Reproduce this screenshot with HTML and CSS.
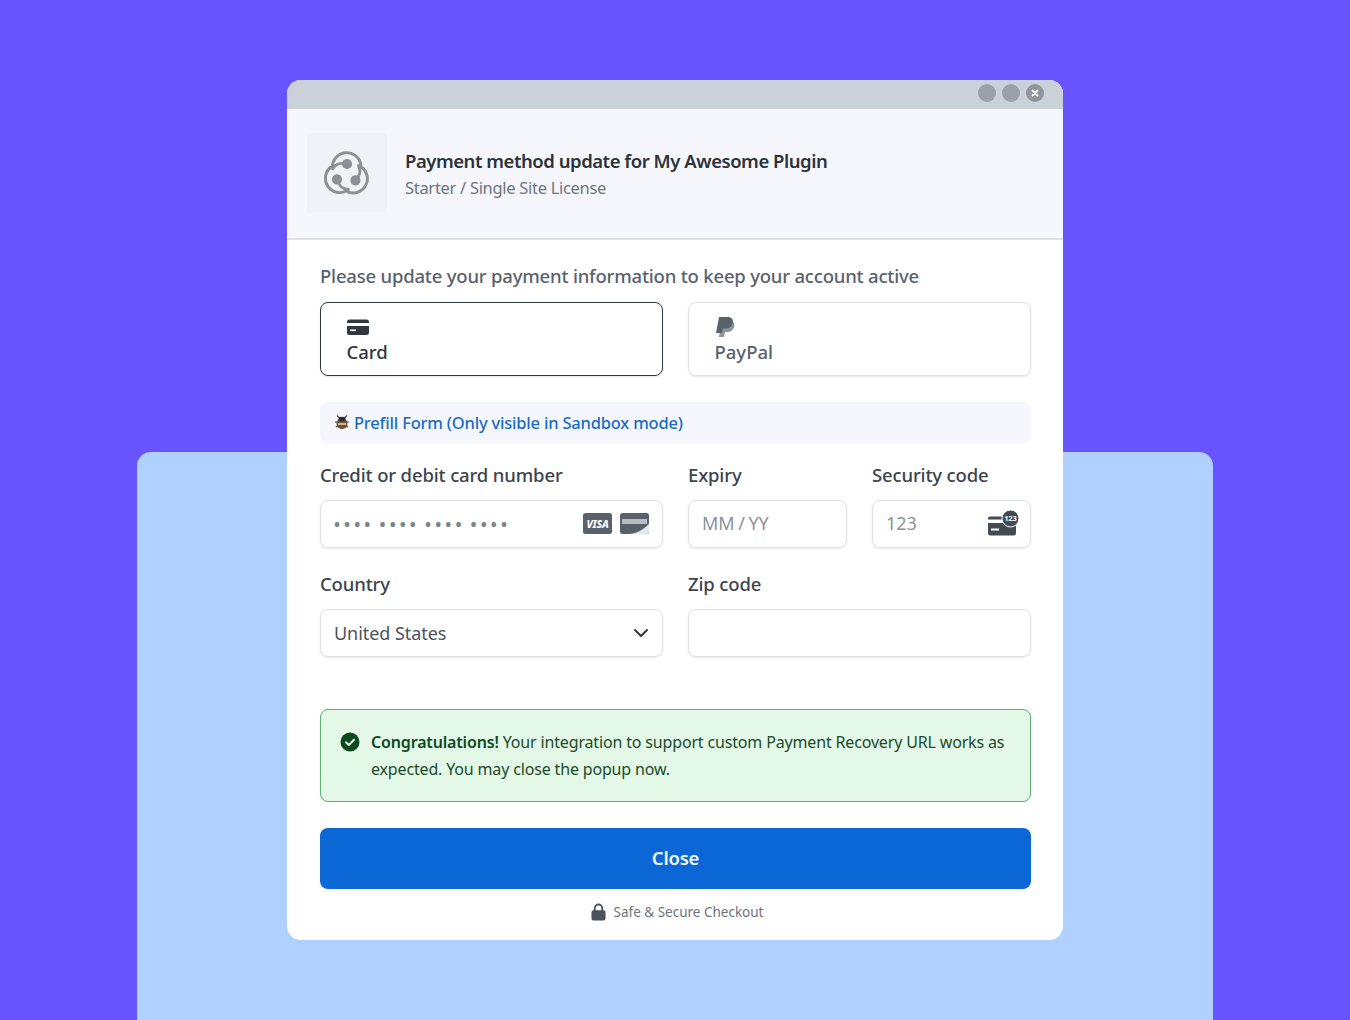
FILE: index.html
```html
<!DOCTYPE html>
<html lang="en">
  <head>
    <meta charset="UTF-8" />
    <meta name="viewport" content="width=device-width, initial-scale=1.0" />
    <title>Payment method update</title>
    <link rel="stylesheet" href="styles.css">
  </head>
  <body>
    <div class="backdrop"></div>
    <div class="modal">
      <div class="titlebar">
        <span class="dot"></span>
        <span class="dot"></span>
        <span class="dot dot-close">
          <svg width="8" height="8" viewBox="0 0 8 8"><path d="M1.5 1.5l5 5M6.5 1.5l-5 5" stroke="#fff" stroke-width="1.8" stroke-linecap="round" /></svg>
        </span>
      </div>

      <div class="header">
        <div class="logo">
          <svg width="51" height="51" viewBox="0 0 48 48" fill="none" stroke="#8e9093" stroke-width="2.800" stroke-linecap="round">
            <g id="swirl">
              <path d="M10.700 19A13.500 13.500 0 0 1 37.500 16.500" />
              <path d="M24.500 16C19 14.500 13.500 16 11 20.500" />
              <circle cx="24.500" cy="16" r="4.800" fill="#8e9093" stroke="none" />
            </g>
            <use href="#swirl" transform="rotate(120 24 26)" />
            <use href="#swirl" transform="rotate(240 24 26)" />
          </svg>
        </div>
        <div class="header-text">
          <div class="header-title">Payment method update for My Awesome Plugin</div>
          <div class="header-sub">Starter / Single Site License</div>
        </div>
      </div>

      <div class="content">
        <p class="intro">Please update your payment information to keep your account active</p>

        <div class="tabs">
          <div class="tab tab-active">
            <div class="tab-icon">
              <svg width="22" height="16" viewBox="0 0 22 16">
                <path d="M0 3a2.500 2.500 0 0 1 2.500-2.500h17A2.500 2.500 0 0 1 22 3v1H0zM0 7h22v6.500a2.500 2.500 0 0 1-2.500 2.500h-17A2.500 2.500 0 0 1 0 13.500z" fill="#30373f" />
                <rect x="3" y="10.500" width="6" height="1.600" fill="#fff" />
              </svg>
            </div>
            <span>Card</span>
          </div>
          <div class="tab">
            <div class="tab-icon">
              <svg width="20" height="20" viewBox="0 0 20 20">
                <path d="M6.500 4h8C18 4 20 6 19.300 9.200 18.500 13 15.500 15 12 15H10L8.800 20H4z" fill="#8b929a" />
                <path d="M4 0h8.500C16.500 0 18.500 2.300 17.800 5.500 17 9.500 14 11.500 10 11.500H8L6.800 16H1z" fill="#59626c" />
              </svg>
            </div>
            <span>PayPal</span>
          </div>
        </div>

        <div class="prefill">
          <svg width="16" height="16" viewBox="0 0 16 16">
            <path d="M3 1.500l3 3M13 1.500l-3 3M1 8h2M13 8h2M2 13l2-1.500M14 13l-2-1.500" stroke="#4a4036" stroke-width="1.200" />
            <ellipse cx="8" cy="9.500" rx="5.500" ry="5.500" fill="#6f5236" />
            <ellipse cx="8" cy="5" rx="3.500" ry="2.200" fill="#2e2a26" />
            <path d="M4 10h8" stroke="#e9dcc8" stroke-width="1.500" />
          </svg>
          <span>Prefill Form (Only visible in Sandbox mode)</span>
        </div>

        <div class="form-row">
          <div class="form-group">
            <label>Credit or debit card number</label>
            <div class="input">
              <span class="dots">&bull;&bull;&bull;&bull; &bull;&bull;&bull;&bull; &bull;&bull;&bull;&bull; &bull;&bull;&bull;&bull;</span>
              <span class="card-badge card-visa">VISA</span>
              <span class="card-badge card-discover">
                <svg width="29" height="21" viewBox="0 0 29 21">
                  <rect width="29" height="21" rx="2.500" fill="#59626c" />
                  <rect x="2" y="6" width="25" height="5" fill="#b9bec3" />
                  <path d="M29 11v7.500a2.500 2.500 0 0 1-2.500 2.500H10c8-1 14-5 19-10z" fill="#e4e6e8" />
                </svg>
              </span>
            </div>
          </div>
          <div class="form-split">
            <div class="form-group">
              <label>Expiry</label>
              <div class="input placeholder">MM / YY</div>
            </div>
            <div class="form-group">
              <label>Security code</label>
              <div class="input placeholder">
                <span class="grow">123</span>
                <svg class="cvc" width="32" height="26" viewBox="0 0 32 26">
                  <path d="M1 8.500a2 2 0 0 1 2-2h14v3H1zM1 13h28v10a2.500 2.500 0 0 1-2.500 2.500h-23A2.500 2.500 0 0 1 1 23z" fill="#434c55" />
                  <rect x="4" y="18.500" width="8" height="2" fill="#fff" />
                  <circle cx="23.500" cy="8.500" r="8.500" fill="#434c55" stroke="#fff" stroke-width="1" />
                  <text x="23.500" y="11" text-anchor="middle" class="cvc-text">123</text>
                </svg>
              </div>
            </div>
          </div>
        </div>

        <div class="form-row form-row-second">
          <div class="form-group">
            <label>Country</label>
            <div class="input">
              <span class="grow">United States</span>
              <svg width="16" height="10" viewBox="0 0 16 10" fill="none"><path d="M2 2l6 6 6-6" stroke="#30373f" stroke-width="2" stroke-linecap="round" stroke-linejoin="round" /></svg>
            </div>
          </div>
          <div class="form-group">
            <label>Zip code</label>
            <div class="input"></div>
          </div>
        </div>

        <div class="alert">
          <svg class="alert-icon" width="20" height="20" viewBox="0 0 20 20">
            <circle cx="10" cy="10" r="9.500" fill="#0b4a1f" />
            <path d="M6 10.300l2.800 2.700L14 7.800" fill="none" stroke="#e3f8e6" stroke-width="2" stroke-linecap="round" stroke-linejoin="round" />
          </svg>
          <p><strong>Congratulations!</strong> Your integration to support custom Payment Recovery URL works as expected. You may close the popup now.</p>
        </div>

        <button type="button" class="close-button">Close</button>

        <div class="secure">
          <svg width="15" height="18" viewBox="0 0 16 18">
            <path d="M4 8V5a4 4 0 0 1 8 0v3" fill="none" stroke="#4a535c" stroke-width="2" />
            <rect x="0.500" y="7" width="15" height="11" rx="2" fill="#4a535c" />
          </svg>
          <span>Safe &amp; Secure Checkout</span>
        </div>
      </div>
    </div>
  </body>
</html>
```

FILE: styles.css
```css
* {
  box-sizing: border-box;
}

body {
  margin: 0;
  height: 1020px;
  overflow: hidden;
  position: relative;
  background-color: #6854ff;
  font-family: "Noto Sans", "Liberation Sans", sans-serif;
  padding-top: 80px;
}

.backdrop {
  position: absolute;
  left: 137px;
  top: 452px;
  width: 1076px;
  height: 600px;
  background-color: #b0d1ff;
  border-radius: 14px;
}

.modal {
  position: relative;
  width: 776px;
  height: 860px;
  margin-left: 287px;
  background-color: #fff;
  border-radius: 14px;
  overflow: hidden;
}

.titlebar {
  display: flex;
  justify-content: flex-end;
  align-items: center;
  gap: 6px;
  height: 29px;
  padding-right: 19px;
  padding-bottom: 3px;
  background-color: #cbd1d8;
}

.dot {
  display: flex;
  align-items: center;
  justify-content: center;
  width: 18px;
  height: 18px;
  border-radius: 50%;
  background-color: #9aa1a8;
}

.dot-close {
  background-color: #8f969d;
}

.header {
  display: flex;
  align-items: center;
  height: 131px;
  padding-left: 20px;
  padding-bottom: 2px;
  background-color: #f6f7fd;
  border-bottom: 2px solid #dfe1e6;
}

.logo {
  display: flex;
  align-items: center;
  justify-content: center;
  width: 80px;
  height: 80px;
  margin-right: 18px;
  padding-right: 1px;
  background-color: #f1f2f8;
  border-radius: 4px;
}

.header-text {
  padding-top: 4px;
}

.header-title {
  font-size: 18.500px;
  font-weight: 600;
  color: #2c333a;
  letter-spacing: -0.47px;
  line-height: 26px;
}

.header-sub {
  margin-top: 1px;
  font-size: 16.500px;
  color: #6d757d;
  letter-spacing: -0.3px;
  line-height: 26px;
}

.content {
  padding: 0 32px 0 33px;
}

.intro {
  margin: 0;
  height: 62px;
  padding-top: 23px;
  font-size: 18.500px;
  font-weight: 500;
  color: #59626c;
  letter-spacing: -0.2px;
  line-height: 26px;
}

.tabs {
  display: flex;
  gap: 25px;
}

.tab {
  display: flex;
  flex-direction: column;
  justify-content: center;
  align-items: flex-start;
  flex: 1;
  height: 74px;
  padding: 4px 25.500px 0;
  border: 1.500px solid #dfe2e5;
  border-radius: 8px;
  box-shadow: 0 1px 2px rgba(0, 0, 0, 0.1);
  font-size: 18.500px;
  font-weight: 500;
  color: #59626c;
  line-height: 26px;
}

.tab-icon {
  display: flex;
  align-items: center;
  height: 20px;
  margin-bottom: 2px;
}

.tab-active {
  border-color: #30373f;
  color: #30373f;
}

.prefill {
  display: flex;
  align-items: center;
  gap: 4px;
  height: 42px;
  margin-top: 26px;
  padding-left: 14px;
  padding-bottom: 2px;
  background-color: #f6f7fd;
  border-radius: 8px;
  font-size: 16.500px;
  font-weight: 500;
  color: #1a6bc4;
  letter-spacing: -0.2px;
}

.form-row {
  display: grid;
  grid-template-columns: 343px 343px;
  gap: 25px;
  margin-top: 18px;
}

.form-row-second {
  margin-top: 23px;
}

.form-split {
  display: grid;
  grid-template-columns: 159px 159px;
  gap: 25px;
}

.form-group label {
  display: block;
  height: 38px;
  font-size: 18.500px;
  font-weight: 500;
  color: #3c444c;
  letter-spacing: -0.15px;
  line-height: 26px;
}

.input {
  display: flex;
  align-items: center;
  height: 48px;
  padding: 0 13px 1px 13px;
  border: 1.500px solid #dfe2e5;
  border-radius: 8px;
  box-shadow: 0 1px 2px rgba(0, 0, 0, 0.1);
  font-size: 18px;
  color: #4a535c;
  letter-spacing: -0.05px;
}

.placeholder {
  padding-bottom: 2px;
  color: #8b9299;
  word-spacing: -1px;
}

.grow {
  flex: 1;
}

.dots {
  flex: 1;
  font-size: 16px;
  font-weight: 700;
  color: #7b838b;
  letter-spacing: 4.100px;
  word-spacing: -3.200px;
}

.card-badge {
  display: flex;
  align-items: center;
  justify-content: center;
  height: 21px;
}

.card-visa {
  width: 29px;
  margin-right: 8px;
  background-color: #59626c;
  border-radius: 2.500px;
  font-size: 10.500px;
  font-weight: 800;
  font-style: italic;
  color: #fff;
  letter-spacing: -0.3px;
}

.cvc {
  margin-right: -2px;
}

.cvc-text {
  font-size: 7.500px;
  font-weight: 700;
  fill: #fff;
}

.alert {
  display: flex;
  align-items: flex-start;
  height: 93px;
  margin-top: 52px;
  padding: 19px 20px 0 19px;
  background-color: #e3f8e6;
  border: 1.500px solid #5fb06e;
  border-radius: 8px;
}

.alert-icon {
  flex-shrink: 0;
  margin: 3px 11px 0 0;
}

.alert p {
  margin: 0;
  font-size: 16px;
  color: #204a2c;
  letter-spacing: -0.16px;
  line-height: 27px;
}

.alert strong {
  font-weight: 600;
  color: #0b4a1f;
}

.close-button {
  display: block;
  width: 711px;
  height: 61px;
  margin-top: 26px;
  padding-bottom: 4px;
  background-color: #0b66d6;
  border: none;
  border-radius: 8px;
  font-family: inherit;
  font-size: 18.500px;
  font-weight: 600;
  color: #f2f7ff;
  letter-spacing: -0.2px;
}

.secure {
  display: flex;
  align-items: center;
  justify-content: center;
  gap: 8px;
  margin-top: 13px;
  padding-left: 3px;
  font-size: 13.500px;
  color: #6d757d;
  line-height: 20px;
}
```
